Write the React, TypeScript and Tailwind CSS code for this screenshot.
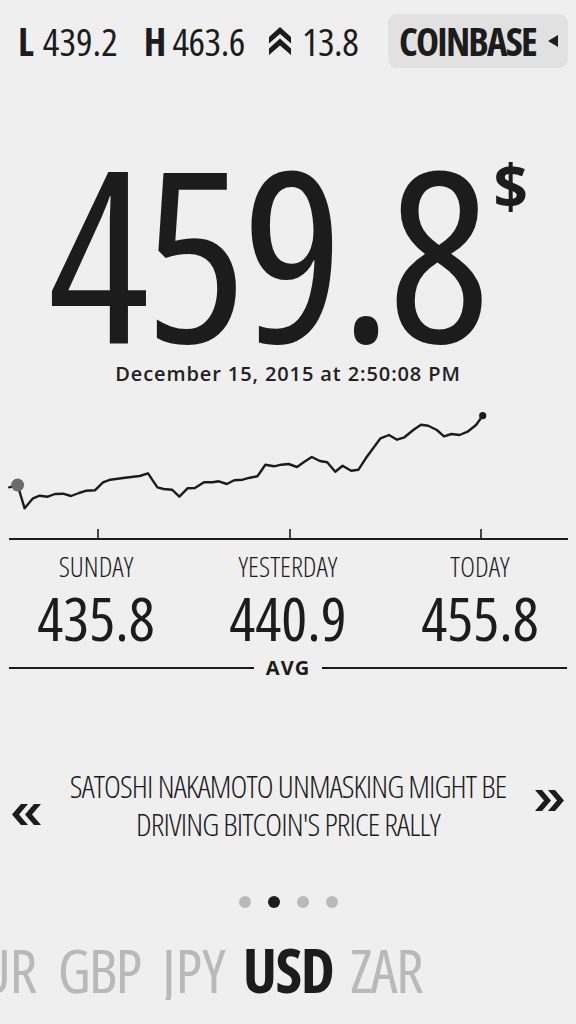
const chartPoints: [number, number][] = [
  [9.2, 488.3], [17.6, 486], [24.6, 509.3], [33, 499.3], [39.7, 496.7], [47.8, 497.7],
  [55, 495], [63, 494.7], [71, 497], [79, 494], [86.4, 491.7], [94.9, 491.3],
  [103, 483.3], [110.3, 480.7], [125, 478.7], [139.7, 477], [148, 474.3], [157.4, 488.3],
  [163.6, 490], [172, 490.7], [179.4, 497.7], [187.5, 489.3], [194.9, 489], [204, 483.3],
  [212.5, 483.3], [218.8, 482.3], [226.8, 485], [234.2, 481.3], [242.6, 480.7], [250, 478.7],
  [257.4, 477.3], [265.4, 465.7], [273.9, 467.3], [281.3, 465.7], [288.6, 465], [297, 468],
  [304.4, 462.7], [311.8, 458], [319.9, 462], [327.2, 463.3], [335.3, 472.7], [342.6, 466.7],
  [351.1, 471.7], [358.5, 470.7], [365.8, 459.3], [380.5, 439.3], [389, 436], [397, 440.7],
  [404.4, 438.3], [413.6, 430.7], [421, 425.7], [428.3, 426.7], [436.8, 431], [444, 437.3],
  [451.5, 435], [459.6, 436], [467.6, 432.7], [476, 426], [482.7, 416.7],
];

const CHART_TOP = 405;

function Chart() {
  const d = chartPoints
    .map(([x, y], i) => `${i === 0 ? "M" : "L"}${x.toFixed(1)} ${(y - CHART_TOP).toFixed(1)}`)
    .join(" ");
  return (
    <svg width="576" height="140" viewBox="0 0 576 140" className="block">
      <path d={d} fill="none" stroke="#1c1c1c" strokeWidth="2.4" strokeLinejoin="round" strokeLinecap="round" />
      <circle cx="17.6" cy={486 - CHART_TOP} r="6.5" fill="#6b6b6b" />
      <circle cx="482.7" cy={416.7 - CHART_TOP} r="3.6" fill="#1c1c1c" />
      <line x1="9" y1="135" x2="568" y2="135" stroke="#1c1c1c" strokeWidth="2" />
      <line x1="98" y1="125" x2="98" y2="135" stroke="#1c1c1c" strokeWidth="1.6" />
      <line x1="290" y1="125" x2="290" y2="135" stroke="#1c1c1c" strokeWidth="1.6" />
      <line x1="481" y1="125" x2="481" y2="135" stroke="#1c1c1c" strokeWidth="1.6" />
    </svg>
  );
}

function UpChevrons() {
  return (
    <svg width="22" height="28" viewBox="0 0 22 28" className="block">
      <path d="M0 10 L11 0 L22 10 L22 16.5 L11 7 L0 16.5 Z" fill="#1c1c1c" />
      <path d="M0 21.5 L11 11.5 L22 21.5 L22 28 L11 18.5 L0 28 Z" fill="#1c1c1c" />
    </svg>
  );
}

function DoubleLeft() {
  return (
    <svg width="29" height="21" viewBox="0 0 29 21" className="block">
      <path d="M9 0 L16 0 L7 10.5 L16 21 L9 21 L0 10.5 Z" fill="#1c1c1c" />
      <path d="M22 0 L29 0 L20 10.5 L29 21 L22 21 L13 10.5 Z" fill="#1c1c1c" />
    </svg>
  );
}

function DoubleRight() {
  return (
    <svg width="29" height="21" viewBox="0 0 29 21" className="block">
      <path d="M0 0 L7 0 L16 10.5 L7 21 L0 21 L9 10.5 Z" fill="#1c1c1c" />
      <path d="M13 0 L20 0 L29 10.5 L20 21 L13 21 L22 10.5 Z" fill="#1c1c1c" />
    </svg>
  );
}

export default function App() {
  return (
    <div className="w-[576px] h-[1024px] overflow-hidden bg-[#efefef] text-[#1c1c1c] font-['Open_Sans',sans-serif] [font-stretch:75%]">
      {/* Top bar */}
      <div className="flex items-center pt-[14px] pl-[18px] pr-[8px]">
        <div className="flex items-center text-[39px] leading-[54px] whitespace-nowrap">
          <span className="font-bold">L</span>
          <span className="ml-[9px] font-normal">439.2</span>
          <span className="ml-[26px] font-bold">H</span>
          <span className="ml-[6px] font-normal tracking-[-0.5px]">463.6</span>
          <span className="ml-[24px]"><UpChevrons /></span>
          <span className="ml-[11px] font-normal tracking-[-0.5px]">13.8</span>
        </div>
        <div className="ml-auto flex h-[54px] w-[180px] items-center rounded-[9px] bg-[#e1e1e1] pl-[11px] pr-[10px]">
          <span className="text-[39px] font-bold leading-[54px] tracking-[-1.8px]">COINBASE</span>
          <svg width="10" height="12" viewBox="0 0 10 12" className="ml-auto block">
            <polygon points="10,0 10,12 0,6" fill="#1c1c1c" />
          </svg>
        </div>
      </div>

      {/* Big price */}
      <div className="mt-[83px] flex justify-center items-start">
        <span className="text-[238px] leading-[200px] font-normal tracking-[-4px]">459.8</span>
        <span className="ml-[8px] mt-[4px] [font-stretch:100%] text-[60px] font-bold leading-[60px]">$</span>
      </div>

      {/* Date */}
      <div className="mt-[13px] text-center [font-stretch:100%] text-[20px] font-semibold leading-[20px] tracking-[0.9px] text-[#222]">
        December 15, 2015 at 2:50:08 PM
      </div>

      {/* Chart */}
      <div className="mt-[20px]">
        <Chart />
      </div>

      {/* Averages */}
      <div className="grid grid-cols-3 mt-[8px]">
        {[
          ["SUNDAY", "435.8"],
          ["YESTERDAY", "440.9"],
          ["TODAY", "455.8"],
        ].map(([label, value]) => (
          <div key={label} className="flex flex-col items-center">
            <span className="text-[28px] font-light leading-[28px]">{label}</span>
            <span className="mt-[7px] text-[61px] font-normal leading-[61px]">{value}</span>
          </div>
        ))}
      </div>

      <div className="mt-[10px] flex items-center gap-[12px] px-[9px]">
        <div className="h-[2px] flex-1 bg-[#1c1c1c]" />
        <span className="[font-stretch:100%] text-[20px] font-bold leading-[20px] tracking-[1px]">AVG</span>
        <div className="h-[2px] flex-1 bg-[#1c1c1c]" />
      </div>

      {/* News */}
      <div className="mt-[89px] flex items-start">
        <div className="w-[52px] pl-[12px] pt-[37px]">
          <DoubleLeft />
        </div>
        <div className="flex-1 text-center text-[32px] font-light leading-[38px] tracking-[-0.9px] whitespace-nowrap">
          SATOSHI NAKAMOTO UNMASKING MIGHT BE
          <br />
          DRIVING BITCOIN'S PRICE RALLY
        </div>
        <div className="w-[52px] pl-[11px] pt-[23px]">
          <DoubleRight />
        </div>
      </div>

      {/* Page dots */}
      <div className="mt-[53px] flex justify-center gap-[17px]">
        <div className="h-[12px] w-[12px] rounded-full bg-[#b9b9b9]" />
        <div className="h-[12px] w-[12px] rounded-full bg-[#1c1c1c]" />
        <div className="h-[12px] w-[12px] rounded-full bg-[#b9b9b9]" />
        <div className="h-[12px] w-[12px] rounded-full bg-[#b9b9b9]" />
      </div>

      {/* Currencies */}
      <div className="mt-[31px] flex gap-[17px] text-[61px] leading-[61px] whitespace-nowrap">
        <div className="flex min-w-0 flex-1 justify-end gap-[22px] overflow-hidden text-[#b9b9b9]">
          <span className="shrink-0 tracking-[-1.5px]">EUR</span>
          <span className="shrink-0 tracking-[-2px]">GBP</span>
          <span className="shrink-0 tracking-[0px]">JPY</span>
        </div>
        <span className="shrink-0 font-bold tracking-[-1.5px]">USD</span>
        <div className="flex min-w-0 flex-1 justify-start gap-[19px] overflow-hidden text-[#b9b9b9]">
          <span className="shrink-0 tracking-[-1.5px]">ZAR</span>
        </div>
      </div>
    </div>
  );
}
